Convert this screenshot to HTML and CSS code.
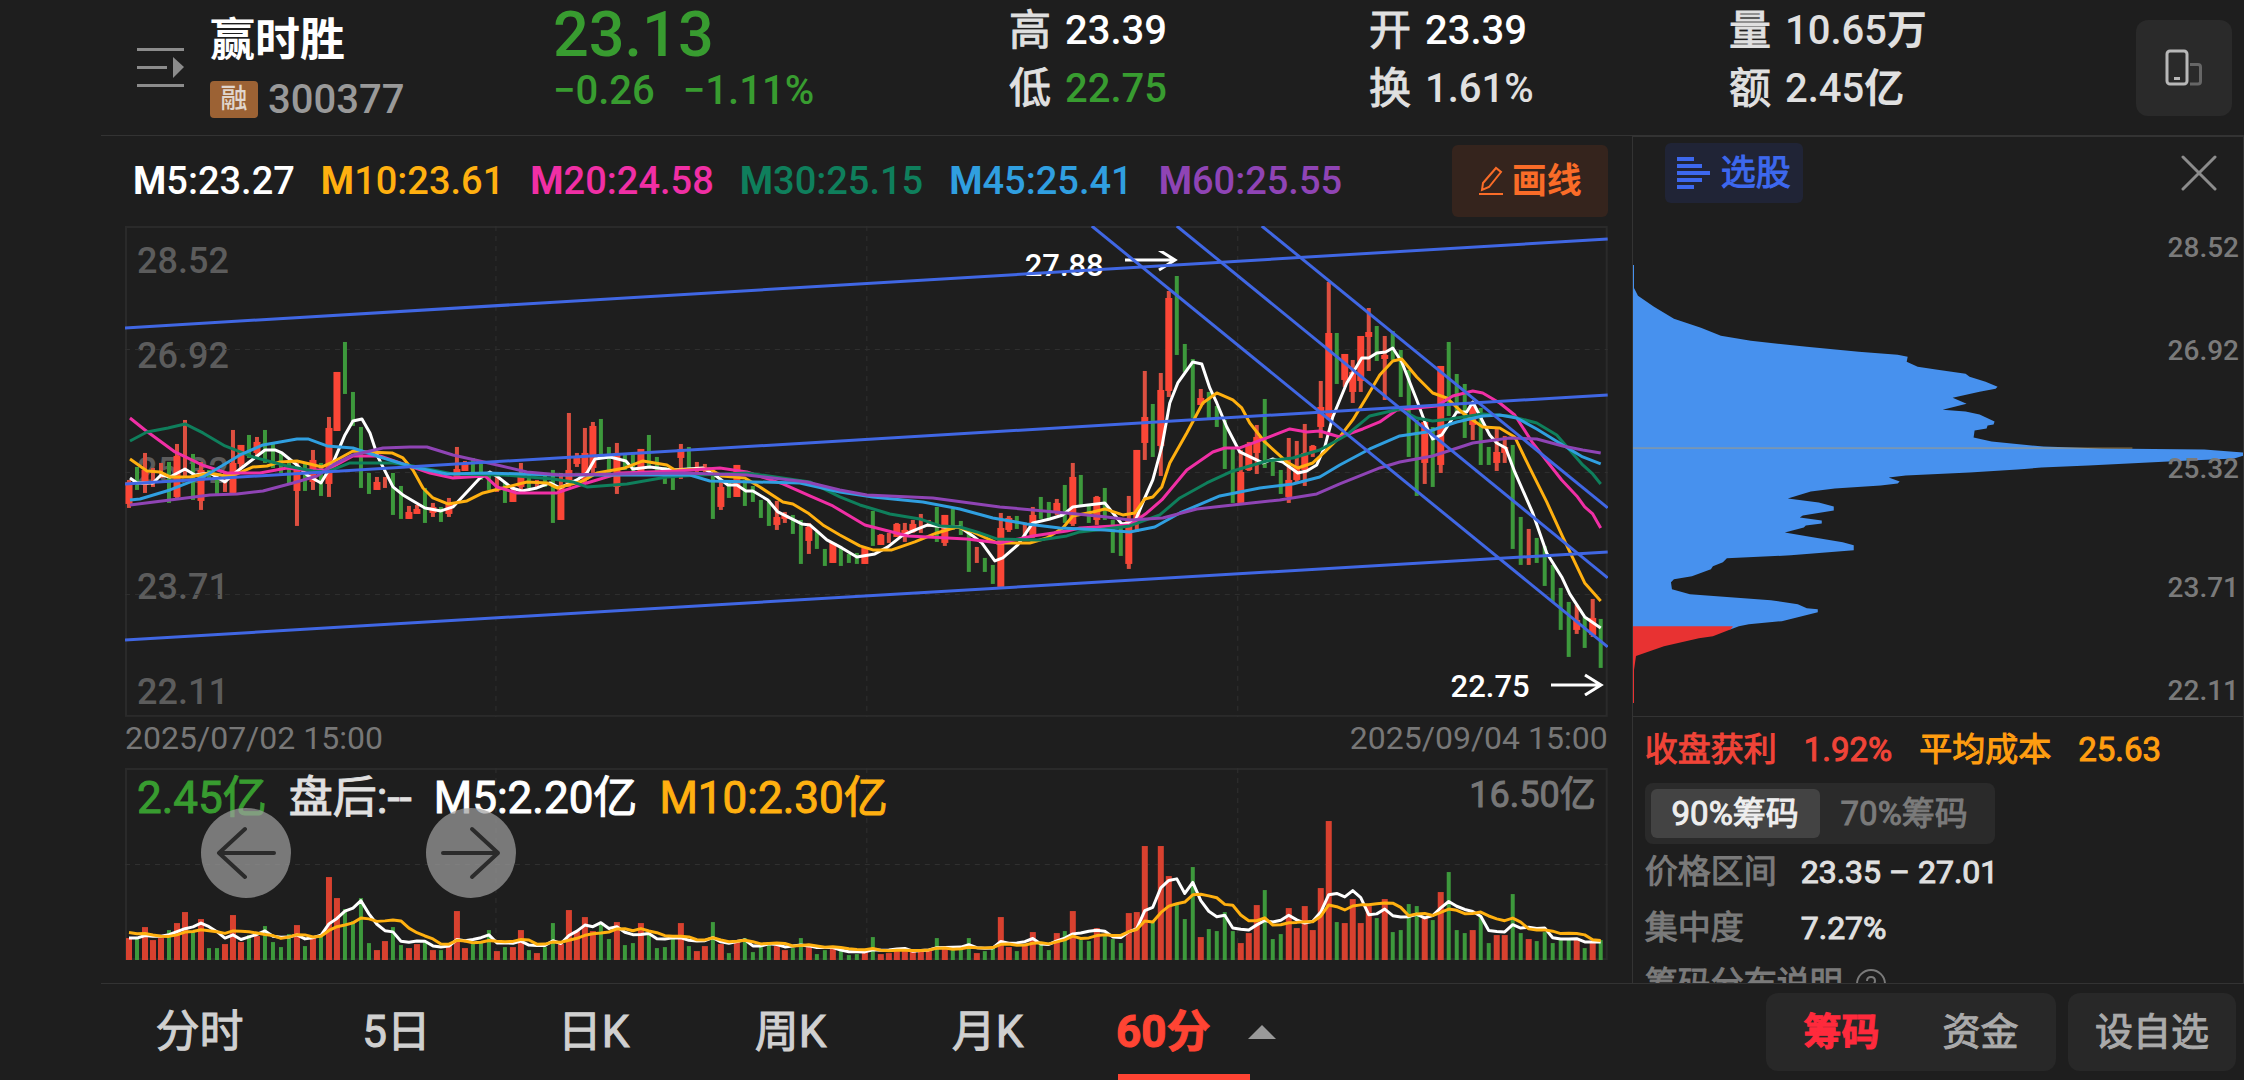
FILE: index.html
```html
<!DOCTYPE html>
<html lang="zh-CN">
<head>
    <meta charset="UTF-8">
    <title>赢时胜 300377</title>
    <link rel="stylesheet" href="styles.css">
</head>
<body>
    <header class="quote-bar">
        <button class="icon-button menu-button" aria-label="列表">
            <svg width="48" height="42" viewBox="0 0 48 42" fill="#8c8c8c">
                <rect x="0" y="1" width="47" height="3"/>
                <rect x="0" y="19" width="30" height="3"/>
                <rect x="0" y="37" width="47" height="3"/>
                <path d="M36 10 L47 20 L36 31 Z"/>
            </svg>
        </button>
        <div class="stock">
            <h1>赢时胜</h1>
            <div class="stock-code"><span class="badge">融</span><span>300377</span></div>
        </div>
        <div class="price down">
            <div class="price-now">23.13</div>
            <div class="price-change"><span>−0.26</span><span>−1.11%</span></div>
        </div>
        <dl class="facts">
            <div><dt>高</dt><dd class="bright">23.39</dd></div>
            <div><dt>低</dt><dd class="down">22.75</dd></div>
        </dl>
        <dl class="facts">
            <div><dt>开</dt><dd class="bright">23.39</dd></div>
            <div><dt>换</dt><dd>1.61%</dd></div>
        </dl>
        <dl class="facts">
            <div><dt>量</dt><dd>10.65<b>万</b></dd></div>
            <div><dt>额</dt><dd>2.45<b>亿</b></dd></div>
        </dl>
        <button class="icon-button rotate-button" aria-label="竖屏">
            <svg width="38" height="38" viewBox="0 0 38 38" fill="none" stroke-width="3">
                <rect x="2" y="2" width="20" height="33" rx="3" stroke="#b8b8b8"/>
                <path d="M9 29.500H15" stroke="#b8b8b8"/>
                <path d="M25 15.500H33Q35.500 15.500 35.500 18V32.500Q35.500 35 33 35H25" stroke="#666"/>
            </svg>
        </button>
    </header>

    <main class="content">
        <section class="charts">
            <div class="toolbar">
                <div class="averages">
                    <span class="m5"><b>M</b>5:23.27</span>
                    <span class="m10"><b>M</b>10:23.61</span>
                    <span class="m20"><b>M</b>20:24.58</span>
                    <span class="m30"><b>M</b>30:25.15</span>
                    <span class="m45"><b>M</b>45:25.41</span>
                    <span class="m60"><b>M</b>60:25.55</span>
                </div>
                <button class="draw-button">
                    <svg width="26" height="30" viewBox="0 0 26 30" fill="none" stroke="#fa6c28" stroke-width="2">
                        <path d="M4 24 L5 17 L18 2 L23 6 L11 21 Z"/>
                        <path d="M1 28H25"/>
                    </svg>
                    画线
                </button>
            </div>

            <div class="plot">
                <ul class="scale scale-left">
                    <li>28.52</li><li>26.92</li><li>25.32</li><li>23.71</li><li>22.11</li>
                </ul>
                <div class="mark mark-high">
                    27.88
                    <svg width="54" height="24" viewBox="0 0 54 24" fill="none" stroke="#fff" stroke-width="3"><path d="M1 9H51M35 -1L51 9L35 19"/></svg>
                </div>
                <div class="mark mark-low">
                    22.75
                    <svg width="54" height="24" viewBox="0 0 54 24" fill="none" stroke="#fff" stroke-width="3"><path d="M1 13H51M35 3L51 13L35 23"/></svg>
                </div>
                <svg class="drawing" id="priceChart" viewBox="0 0 1483 491" preserveAspectRatio="none"></svg>
            </div>

            <div class="dates"><span>2025/07/02 15:00</span><span>2025/09/04 15:00</span></div>

            <div class="plot">
                <svg class="drawing" id="volumeChart" viewBox="0 0 1483 192" preserveAspectRatio="none"></svg>
                <div class="volume-legend">
                    <span class="down">2.45亿</span>
                    <span>盘后:--</span>
                    <span class="m5">M5:2.20亿</span>
                    <span class="m10">M10:2.30亿</span>
                    <span class="volume-max">16.50亿</span>
                </div>
                <div class="pager">
                    <button aria-label="向左">
                        <svg width="60" height="54" viewBox="0 0 60 54" fill="none" stroke="#2b2b2b" stroke-width="4" stroke-linecap="round" stroke-linejoin="round"><path d="M58 27H3M29 3L3 27L29 51"/></svg>
                    </button>
                    <button aria-label="向右">
                        <svg width="60" height="54" viewBox="0 0 60 54" fill="none" stroke="#2b2b2b" stroke-width="4" stroke-linecap="round" stroke-linejoin="round"><path d="M2 27H57M31 3L57 27L31 51"/></svg>
                    </button>
                </div>
            </div>
        </section>

        <aside class="chips">
            <div class="chips-head">
                <button class="pick-button">
                    <svg width="34" height="34" viewBox="0 0 34 34" fill="#3d68ee">
                        <rect x="0" y="1" width="17" height="4"/>
                        <rect x="0" y="8" width="25" height="4"/>
                        <rect x="0" y="15" width="33" height="4"/>
                        <rect x="0" y="22" width="25" height="4"/>
                        <rect x="0" y="29" width="17" height="4"/>
                    </svg>
                    选股
                </button>
                <button class="icon-button" aria-label="关闭">
                    <svg width="36" height="36" viewBox="0 0 36 36" stroke="#8c8c8c" stroke-width="3" stroke-linecap="round"><path d="M2 2L34 34M34 2L2 34"/></svg>
                </button>
            </div>
            <div class="chips-plot">
                <svg class="drawing" viewBox="0 0 611 490" preserveAspectRatio="none">
                    <path fill="#4791ee" d="M0 38 L1 38 1 61 5 69 21 80 41 92 68 101 88 109 118 114 174 120 226 125 265 128 275 130 274 135 285 140 305 143 333 147 337 150 353 155 365 160 363 162 347 165 320 171 334 177 310 183 333 185 347 188 362 195 361 198 355 199 354 202 342 204 341 211 359 215 411 220 470 222 572 223 611 226 611 229 602 232 536 235 456 239 409 241 385 243 337 246 273 249 256 251 267 255 265 257 248 259 202 262 178 265 155 272 186 276 201 280 201 284 170 289 167 291 189 294 189 297 173 299 171 301 152 306 180 311 210 316 221 319 221 324 158 329 94 332 90 336 80 340 78 343 59 350 41 353 38 356 39 363 57 368 138 374 165 378 174 382 185 383 185 386 149 395 116 398 106 400 98 403 0 403Z"/>
                    <path fill="#e83232" d="M0 400 L100 400 98 403 80 410 66 412 31 420 3 430 1 444 1 477 0 477Z"/>
                    <path stroke="#c9a157" stroke-opacity=".7" d="M0 221.500H500"/>
                </svg>
                <ul class="scale scale-right">
                    <li>28.52</li><li>26.92</li><li>25.32</li><li>23.71</li><li>22.11</li>
                </ul>
            </div>
            <div class="chips-info">
                <div class="summary">
                    <span class="up">收盘获利</span><span class="up">1.92%</span>
                    <span class="cost">平均成本</span><span class="cost">25.63</span>
                </div>
                <div class="switch">
                    <button class="active">90%筹码</button>
                    <button>70%筹码</button>
                </div>
                <dl class="details">
                    <dt>价格区间</dt><dd>23.35 – 27.01</dd>
                    <dt>集中度</dt><dd>7.27%</dd>
                </dl>
                <a class="help" href="#">
                    筹码分布说明
                    <svg width="32" height="32" viewBox="0 0 32 32" fill="none" stroke="#7a7a7a" stroke-width="2"><circle cx="16" cy="16" r="14"/><path d="M12 13Q12 9 16 9T20 13Q20 15 18 16.500T16 20M16 22V25"/></svg>
                </a>
            </div>
        </aside>
    </main>

    <footer class="bottom-bar">
        <nav class="tabs">
            <button>分时</button>
            <button>5日</button>
            <button>日K</button>
            <button>周K</button>
            <button>月K</button>
            <button class="current">60分
                <svg width="28" height="14" viewBox="0 0 28 14" fill="#999"><path d="M14 0L28 14H0Z"/></svg>
            </button>
        </nav>
        <div class="actions">
            <div class="action-group">
                <button class="selected">筹码</button>
                <button>资金</button>
            </div>
            <button class="add-button">设自选</button>
        </div>
    </footer>
    <script src="script.js"></script>
</body>
</html>
```

FILE: styles.css
```css
* {
    box-sizing: border-box;
    margin: 0;
    padding: 0;
}
body {
    display: flex;
    flex-direction: column;
    height: 100vh;
    overflow: hidden;
    background-color: #1e1e1e;
    color: #e0e0e0;
    font-family: Roboto, "Noto Sans CJK SC", sans-serif;
    font-weight: 500;
    font-size: 40px;
    line-height: 1;
    white-space: nowrap;
}
button {
    border: 0;
    background: none;
    color: inherit;
    font: inherit;
    cursor: pointer;
}
ul {
    list-style: none;
}
svg {
    display: block;
    flex: none;
}
.icon-button {
    display: flex;
    align-items: center;
    justify-content: center;
}

/* Quote header */
.quote-bar {
    display: grid;
    grid-template-columns: 73px 343px 456px 360px 360px 1fr 96px;
    align-items: center;
    height: 136px;
    flex: none;
    margin-left: 101px;
    padding: 0 12px 0 36px;
    border-bottom: 1px solid #333;
}
.menu-button {
    justify-content: flex-start;
}
.stock {
    padding-top: 6px;
}
h1 {
    font-size: 45px;
    font-weight: 700;
    line-height: 58px;
    color: #fff;
}
.stock-code {
    display: flex;
    align-items: center;
    gap: 10px;
    line-height: 60px;
    color: #999;
}
.badge {
    width: 48px;
    height: 37px;
    border-radius: 4px;
    background-color: #9c6234;
    color: #e0d6ce;
    font-size: 27px;
    line-height: 36px;
    text-align: center;
}
.price,
.facts {
    align-self: start;
}
.price-now {
    padding-top: 4px;
    font-size: 63px;
    line-height: 62px;
}
.price-change {
    display: flex;
    gap: 28px;
    line-height: 50px;
}
.facts {
    padding-top: 2px;
}
.facts div {
    display: flex;
    gap: 14px;
    line-height: 58px;
}
.facts dt {
    font-size: 42px;
}
.bright {
    color: #fff;
}
.down {
    color: #389c30;
}
.up {
    color: #f04438;
}
.cost {
    color: #ff9d10;
}
.rotate-button {
    height: 96px;
    border-radius: 12px;
    background-color: #2a2a2a;
}

/* Main area: charts on the left, chip distribution on the right */
.content {
    display: grid;
    grid-template-columns: 5fr 2fr;
    flex: 1;
    min-height: 0;
    margin-left: 101px;
}
.charts {
    display: grid;
    grid-template-rows: 90px 23fr 51px 9fr;
    padding: 0 24px 23px 24px;
}
.toolbar {
    display: flex;
    align-items: center;
    justify-content: space-between;
}
.averages {
    display: flex;
    gap: 26px;
    padding-left: 8px;
    font-size: 38px;
}
.m5 { color: #fff; }
.m10 { color: #ffb010; }
.m20 { color: #f02fa5; }
.m30 { color: #0f7f5c; }
.m45 { color: #309fe0; }
.m60 { color: #8f44b5; }
.draw-button {
    display: flex;
    align-items: center;
    justify-content: center;
    gap: 8px;
    width: 156px;
    height: 72px;
    border-radius: 6px;
    background-color: #35241d;
    color: #fa6c28;
    font-size: 35px;
    font-weight: 700;
}
.plot,
.chips-plot {
    position: relative;
    min-height: 0;
}
.drawing {
    position: absolute;
    inset: 0;
    width: 100%;
    height: 100%;
}
.scale {
    position: absolute;
    display: grid;
    line-height: 30px;
}
.scale-left {
    top: 20px;
    bottom: 10px;
    left: 12px;
    grid-template-rows: 95fr 115fr 116fr 105fr 30px;
    color: #5c5c5c;
    font-size: 36px;
}
.scale-right {
    top: 6px;
    bottom: 10px;
    right: 4px;
    grid-template-rows: 103fr 119fr 119fr 103fr 30px;
    color: #7a7a7a;
    font-size: 28px;
}
.mark {
    position: absolute;
    display: flex;
    gap: 20px;
    color: #fff;
    font-size: 31px;
    line-height: 30px;
}
.mark-high {
    top: 5%;
    right: 29%;
}
.mark-low {
    right: 4px;
    bottom: 3%;
}
.dates {
    display: flex;
    justify-content: space-between;
    color: #777;
    font-size: 32px;
    font-weight: 400;
    line-height: 42px;
}
.volume-legend {
    position: absolute;
    inset: 0;
    display: flex;
    gap: 22px;
    padding: 0 12px;
    font-size: 44px;
    line-height: 60px;
}
.volume-max {
    margin-left: auto;
    color: #777;
    font-size: 36px;
    line-height: 54px;
}
.pager {
    position: absolute;
    top: 40px;
    left: 76px;
    display: flex;
    gap: 135px;
}
.pager button {
    display: flex;
    align-items: center;
    justify-content: center;
    width: 90px;
    height: 90px;
    border-radius: 50%;
    background-color: rgba(160, 160, 160, 0.7);
}

/* Chart strokes */
.frame {
    fill: none;
    stroke: #2a2a2a;
    stroke-width: 2;
}
.grid {
    stroke: #303030;
    stroke-width: 1;
    stroke-dasharray: 5 5;
}
.line {
    fill: none;
    stroke: currentColor;
    stroke-width: 3;
    stroke-linejoin: round;
}
.trend {
    stroke: #4067e4;
    stroke-width: 3;
}
.rise { fill: #fb4636; }
.rise-wick { fill: #dc4f40; }
.rise-bar { fill: #d8412f; }
.fall { fill: #3d993c; }

/* Chip distribution panel */
.chips {
    display: grid;
    grid-template-rows: 90px 1fr 267px;
    min-height: 0;
    border: 1px solid #333;
    border-bottom: 0;
}
.chips-head {
    display: flex;
    align-items: center;
    justify-content: space-between;
    padding: 0 26px 18px 32px;
}
.pick-button {
    display: flex;
    align-items: center;
    justify-content: center;
    gap: 10px;
    width: 138px;
    height: 60px;
    border-radius: 6px;
    background-color: #202436;
    color: #3d68ee;
    font-size: 35px;
}
.chips-info {
    overflow: hidden;
    padding: 0 12px;
    border-top: 1px solid #333;
    font-size: 33px;
}
.summary {
    display: flex;
    gap: 27px;
    line-height: 66px;
}
.switch {
    display: flex;
    width: max-content;
    padding: 6px;
    border-radius: 8px;
    background-color: #2a2a2a;
    color: #7a7a7a;
}
.switch button {
    width: 169px;
    height: 49px;
    border-radius: 6px;
}
.switch .active {
    background-color: #434343;
    color: #eee;
}
.details {
    display: grid;
    grid-template-columns: 156px 1fr;
    line-height: 56px;
}
.details dt {
    color: #7a7a7a;
}
.details dd {
    font-size: 32px;
}
.help {
    display: flex;
    align-items: center;
    gap: 12px;
    color: #7a7a7a;
    line-height: 56px;
    text-decoration: none;
}

/* Bottom bar */
.bottom-bar {
    display: flex;
    justify-content: space-between;
    flex: none;
    height: 97px;
    margin-left: 101px;
    padding-right: 8px;
    border-top: 1px solid #333;
}
.tabs {
    display: grid;
    grid-template-columns: repeat(6, 197px);
    color: #d0d0d0;
    font-size: 44px;
}
.tabs .current {
    position: relative;
    display: flex;
    align-items: center;
    gap: 37px;
    padding-left: 30px;
    color: #ff4433;
    font-weight: 700;
}
.tabs .current::after {
    content: "";
    position: absolute;
    bottom: 0;
    left: 32px;
    width: 132px;
    height: 6px;
    background-color: #ff4433;
}
.actions {
    display: flex;
    align-items: center;
    gap: 12px;
    color: #aaa;
    font-size: 38px;
}
.action-group,
.add-button {
    height: 78px;
    border-radius: 12px;
    background-color: #282828;
}
.action-group {
    display: flex;
    padding: 0 6px;
}
.action-group button {
    width: 139px;
}
.action-group .selected {
    color: #ff2a3c;
    font-weight: 700;
}
.add-button {
    width: 168px;
}

.facts dt,
.pick-button,
.chips-info,
.volume-legend,
.tabs,
.actions {
    -webkit-text-stroke: 1px;
    font-weight: 400;
}
```

FILE: script.js
```js
// direction, high, low, body top, body bottom
const candles = [
    ['r',254,282,256,278],['g',241,264],['r',227,267,244,259],['r',242,261],['r',237,252],['g',236,277],['r',218,272,230,271],['r',194,251],
    ['g',228,274],['r',236,284,244,275],['g',244,252],['g',249,268],['r',247,266],['r',204,267,237,267],['r',219,242,219,238],['g',209,232],
    ['r',211,231,216,227],['g',204,237],['g',218,242],['g',227,247],['g',237,259],['r',237,300,244,265],['g',237,265],['r',224,264,234,256],
    ['g',237,270],['r',191,271,202,258],['r',146,205,146,205],['g',116,168],['g',166,200],['g',201,262],['g',247,268],['r',251,264,256,264],
    ['r',251,262],['g',247,289],['g',260,293],['r',280,293,286,293],['r',279,288,283,288],['g',262,297],['r',277,291,281,287],['g',281,296],
    ['r',272,291,278,288],['r',221,252,243,252],['r',235,245,237,245],['g',232,251],['g',236,254],['g',246,264],['r',251,266],['g',257,277],
    ['r',261,276,266,276],['r',237,264,249,261],['g',246,262],['r',254,262],['g',247,261],['g',244,297],['r',247,294,262,294],['r',187,261,244,257],
    ['r',227,241,232,238],['r',202,257,227,254],['r',196,247,200,242],['g',193,231],['g',221,250],['r',217,268,227,261],['g',229,244],['g',226,246],
    ['r',223,246,223,246],['g',209,242],['g',231,246],['g',241,258],['g',242,264],['r',218,253,223,232],['g',221,242],['r',236,246],
    ['r',238,246],['g',249,293],['r',254,284,261,281],['g',256,272],['r',239,271,239,271],['g',254,280],['g',260,276],['g',274,292],
    ['g',274,300],['r',275,304,291,299],['r',286,297,289,293],['g',289,308],['g',294,338],['r',297,328,301,315],['g',306,323],['g',323,340],
    ['r',317,337,317,337],['g',321,340],['g',328,337],['g',327,338],['r',322,338,322,338],['g',285,320],['r',308,319,309,319],['r',307,317],
    ['r',297,311,298,311],['r',297,316,304,311],['r',294,307,298,306],['r',288,307],['r',294,301],['g',281,316],['r',289,320,289,317],['g',283,304],
    ['g',295,309],['g',306,346],['r',321,337],['g',332,346],['g',339,358],['r',287,361,302,361],['r',290,306,292,304],['g',290,303],
    ['r',297,314],['r',281,312,289,309],['g',271,293],['g',276,292],['r',273,289,277,287],['g',259,297],['r',237,300,251,298],['g',249,280],
    ['g',278,297],['r',270,299,271,294],['g',262,294],['g',294,327],['g',299,330],['r',270,343,294,338],['r',224,306,224,294],['r',145,234,191,217],
    ['g',178,231],['r',147,250,164,220],['r',65,171,72,165],['g',50,129],['g',118,146],['g',133,192],['r',163,179,172,179],['g',166,192],
    ['g',180,201],['g',194,243],['g',222,277],['r',224,277,246,277],['r',216,245,218,244],['r',199,248,211,227],['g',173,242],['g',232,250],
    ['g',244,268],['r',212,277,254,271],['r',215,257,241,254],['r',198,260,227,244],['r',219,231,220,226],['r',155,212,181,201],['r',56,194,107,191],['g',107,158],
    ['r',128,161,128,154],['r',134,177,146,166],['r',110,166,110,155],['r',82,145,106,111],['g',100,135],['r',110,174,129,133],['g',105,134],['g',124,171],
    ['g',144,231],['g',194,270],['r',196,258,196,237],['g',201,261],['r',140,247,140,239],['g',116,190],['g',148,187],['g',158,212],
    ['r',177,214,181,199],['g',182,239],['g',221,239],['r',202,245,226,237],['r',210,237,221,227],['g',219,323],['g',291,339],['r',303,339],
    ['g',312,337],['g',320,360],['g',339,376],['g',362,404],['g',376,431],['r',379,408,394,404],['g',391,422],['r',373,411,392,409],['g',393,442]
];

const volumes = [
    22,22,33,20,22,30,37,48,29,41,12,12,16,45,18,25,24,34,18,13,26,35,14,24,25,83,62,51,39,62,17,10,
    19,33,15,12,16,18,10,10,16,49,12,16,19,30,9,13,13,30,10,7,13,37,16,50,29,43,29,36,21,38,15,17,
    37,26,12,13,23,37,14,9,14,38,16,7,18,22,8,16,18,14,10,12,22,13,6,10,12,9,5,6,9,23,6,7,
    11,11,9,10,10,22,12,10,11,22,7,9,12,43,13,9,15,28,16,10,27,29,49,20,19,32,24,21,17,47,48,114,
    38,114,84,56,41,93,23,31,29,48,29,17,27,55,70,21,26,52,32,54,30,72,139,38,37,61,37,54,42,61,28,30,
    56,54,43,40,68,88,30,27,30,44,17,25,25,66,27,21,19,28,17,20,21,21,12,17,20
];
// bars before the visible range, needed for the first averages
const earlierVolumes = [34, 32, 34, 34, 32, 22, 20, 24, 22];

const averages = {
    m60: '5,279 45,274 85,269 112,268 138,265 168,257 192,250 208,239 228,229 258,222 285,221 302,221 328,229 368,238 402,246 435,249 495,248 558,247 622,249 682,256 715,264 742,269 808,272 875,281 908,284 952,288 982,291 1005,294 1038,292 1072,283 1108,279 1155,274 1192,268 1215,258 1255,242 1275,236 1308,230 1348,217 1385,212 1412,213 1438,220 1458,224 1476,227',
    m5: '5,252 12,257 28,257 36,249 45,251 60,243 70,249 85,247 100,256 110,247 123,237 140,224 150,224 157,227 172,239 182,249 196,257 208,237 220,209 228,195 237,193 245,207 253,231 262,249 268,261 278,269 300,282 316,285 328,281 342,266 355,252 365,246 373,251 387,262 397,265 412,262 425,257 435,262 452,254 462,247 470,233 485,231 501,235 508,243 525,241 548,244 578,242 590,249 603,259 612,259 621,265 628,265 643,274 653,286 677,298 685,299 693,306 702,314 717,322 732,331 750,328 763,321 777,310 788,305 803,299 820,301 835,301 848,310 857,317 870,335 878,332 893,319 908,297 925,293 938,289 948,281 955,280 980,277 997,298 1010,296 1020,272 1028,254 1037,221 1045,177 1053,157 1068,136 1077,138 1085,162 1092,177 1102,201 1115,226 1138,237 1148,233 1158,236 1173,247 1182,245 1192,239 1200,221 1208,191 1222,157 1237,132 1244,132 1252,127 1261,126 1268,122 1277,136 1292,174 1302,201 1308,213 1317,209 1332,186 1342,186 1348,176 1365,209 1372,217 1381,222 1390,246 1408,287 1422,327 1437,351 1445,368 1460,391 1476,402',
    m10: '5,233 22,245 35,246 45,251 65,251 85,247 100,250 112,248 128,241 142,240 155,236 172,235 185,238 197,241 208,236 228,225 242,226 267,227 278,232 288,244 298,262 308,272 323,278 342,275 358,267 382,261 402,256 422,257 432,262 458,255 472,247 500,242 518,235 542,239 550,244 585,243 597,250 620,252 635,261 658,276 668,278 683,287 698,299 715,309 735,320 748,324 767,324 790,316 812,307 832,301 848,306 872,317 905,317 922,312 938,302 948,290 968,286 980,283 998,289 1010,287 1020,273 1028,271 1037,261 1045,237 1062,207 1078,177 1092,167 1108,174 1117,182 1125,197 1140,216 1162,236 1173,242 1188,237 1200,226 1215,211 1228,194 1242,171 1255,149 1268,135 1277,133 1292,151 1308,167 1322,172 1338,187 1358,201 1375,202 1390,211 1405,242 1422,276 1438,311 1460,357 1476,375',
    m20: '5,192 20,204 50,226 77,239 102,247 135,247 162,242 178,244 202,244 228,230 255,230 278,238 305,247 328,252 360,250 372,261 392,267 432,267 462,257 495,247 552,245 595,242 622,246 658,258 685,270 708,280 740,299 783,310 842,313 875,317 908,310 942,305 955,302 1005,299 1022,287 1037,274 1062,244 1088,226 1100,222 1115,222 1142,212 1165,203 1182,206 1195,205 1215,211 1238,203 1255,196 1272,184 1292,182 1312,180 1328,170 1348,165 1358,167 1375,177 1390,189 1408,217 1437,254 1452,270 1460,281 1468,288 1476,302',
    m30: '5,215 22,206 43,202 60,198 78,207 100,220 128,231 162,240 188,245 202,246 225,237 268,237 288,240 328,248 378,249 428,253 448,256 462,261 502,258 542,251 575,249 622,247 685,256 715,271 735,279 765,288 795,293 815,300 835,301 852,306 872,313 915,314 942,310 955,306 1005,300 1035,289 1055,272 1082,257 1108,245 1142,235 1168,232 1195,224 1222,209 1245,190 1275,183 1292,192 1308,195 1325,193 1358,188 1385,190 1412,197 1432,209 1445,224 1458,239 1468,248 1476,258',
    m45: '5,274 15,273 45,264 78,251 95,241 115,229 138,219 155,216 172,213 183,213 202,220 228,222 255,231 288,241 322,248 362,247 428,249 495,249 565,249 585,255 675,257 715,266 748,271 798,276 835,283 868,292 902,298 935,302 980,304 1005,306 1030,301 1055,287 1095,270 1135,262 1168,258 1195,251 1215,239 1245,223 1275,210 1302,206 1332,196 1358,190 1375,189 1392,192 1412,203 1438,219 1458,231 1476,238'
};

// x1, y1, x2, y2
const trends = [
    [0, 102, 1483, 13], [0, 258, 1483, 169], [0, 414, 1483, 326],
    [967, 0, 1483, 421], [1052, 0, 1483, 352], [1137, 0, 1483, 282]
];

const step = 8;

function rect(cls, x, top, bottom, width) {
    return `<rect class="${cls}" x="${x - width / 2}" y="${top}" width="${width}" height="${bottom - top}"/>`;
}

function gridLines(height, rows) {
    let out = `<rect class="frame" x="1" y="1" width="1481" height="${height - 2}"/>`;
    for (let i = 1; i < 4; i++) {
        out += `<line class="grid" x1="${371 * i}" y1="0" x2="${371 * i}" y2="${height}"/>`;
    }
    for (let i = 1; i < rows; i++) {
        const y = Math.round(height * i / rows) + 0.5;
        out += `<line class="grid" x1="0" y1="${y}" x2="1483" y2="${y}"/>`;
    }
    return out;
}

function polyline(cls, points) {
    return `<polyline class="line ${cls}" points="${points}"/>`;
}

function drawPrice() {
    let out = gridLines(491, 4);
    candles.forEach(([dir, high, low, top, bottom], i) => {
        const x = 4 + i * step;
        if (dir === 'g') {
            out += rect('fall', x, high, low, 4);
        } else {
            out += rect('rise-wick', x, high, low, 4);
            if (top) out += rect('rise', x, top, bottom, 7);
        }
    });
    for (const name of ['m5', 'm10', 'm20', 'm30', 'm45', 'm60']) {
        out += polyline(name, averages[name]);
    }
    for (const [x1, y1, x2, y2] of trends) {
        out += `<line class="trend" x1="${x1}" y1="${y1}" x2="${x2}" y2="${y2}"/>`;
    }
    document.getElementById('priceChart').innerHTML = out;
}

function movingAverage(days) {
    const all = earlierVolumes.concat(volumes);
    return volumes.map((v, i) => {
        const end = i + earlierVolumes.length + 1;
        const sum = all.slice(end - days, end).reduce((a, b) => a + b, 0);
        return `${4 + i * step},${(192 - sum / days).toFixed(1)}`;
    }).join(' ');
}

function drawVolume() {
    let out = gridLines(192, 2);
    volumes.forEach((v, i) => {
        const rise = candles[i][0] === 'r';
        out += rect(rise ? 'rise-bar' : 'fall', 4 + i * step, 192 - v, 192, rise ? 6 : 4);
    });
    out += polyline('m5', movingAverage(5));
    out += polyline('m10', movingAverage(10));
    document.getElementById('volumeChart').innerHTML = out;
}

drawPrice();
drawVolume();
```
